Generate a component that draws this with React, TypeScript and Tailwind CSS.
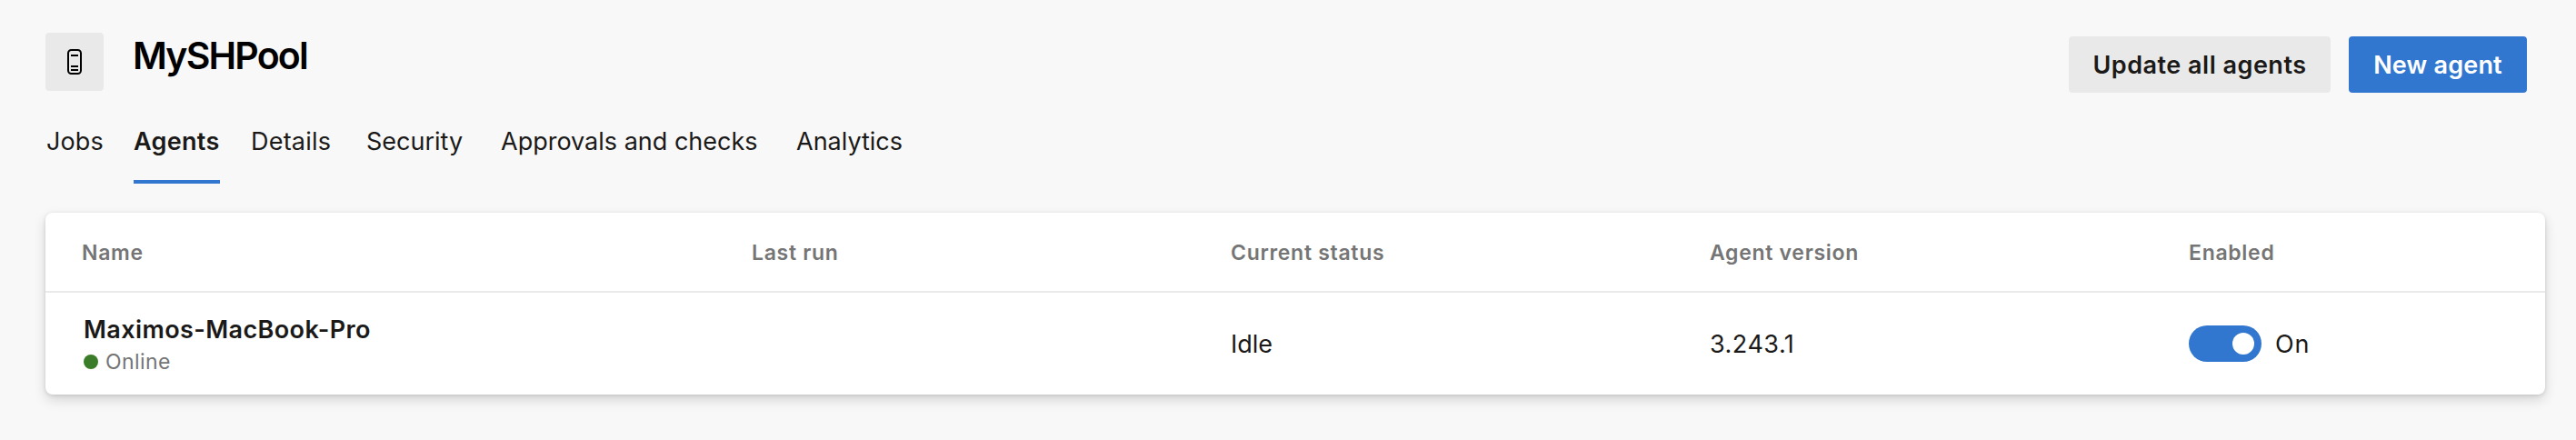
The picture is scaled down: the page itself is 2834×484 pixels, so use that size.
const tabs = [
  { label: "Jobs", cell: "w-[96px]", text: "tracking-[0.1px]" },
  { label: "Agents", cell: "w-[129px]", text: "", active: true },
  { label: "Details", cell: "w-[127px]", text: "tracking-[0.2px]" },
  { label: "Security", cell: "w-[148px]", text: "" },
  { label: "Approvals and checks", cell: "w-[325px]", text: "" },
  { label: "Analytics", cell: "w-[130px]", text: "" },
];

const columns = ["Name", "Last run", "Current status", "Agent version", "Enabled"];

function PoolIcon() {
  return (
    <div className="flex size-16 items-center justify-center rounded bg-[#e9e9e9]">
      <svg width="16" height="28" viewBox="0 0 16 28" fill="none" stroke="#000" strokeWidth="2">
        <rect x="1" y="1" width="14" height="26" rx="3.5" />
        <path d="M4 7h8M4 19h8M4 23h8" />
      </svg>
    </div>
  );
}

function Toggle() {
  return (
    <div className="flex h-10 w-20 items-center justify-end rounded-full bg-[#3277cf] px-2">
      <div className="size-6 rounded-full bg-white" />
    </div>
  );
}

export default function App() {
  return (
    <div className="h-[484px] w-[2834px] bg-[#f8f8f8] pr-[34px] pl-[50px] pt-9 font-['Inter','Liberation_Sans',sans-serif] text-[27px] text-[#1b1a19]">
      <header className="flex h-16 items-start">
        <PoolIcon />
        <h1 className="ml-8 mt-px flex-1 text-[41px] leading-[48px] font-semibold tracking-[-1.8px] text-black">
          MySHPool
        </h1>
        <div className="mt-1 mr-5 flex gap-5 font-semibold">
          <button className="h-[62px] w-72 rounded bg-[#e9e9e9] pt-[3px] tracking-[0.5px]">Update all agents</button>
          <button className="h-[62px] w-[196px] rounded bg-[#3277cf] pt-[3px] tracking-[0.2px] text-white">
            New agent
          </button>
        </div>
      </header>

      <nav className="mt-9 flex h-[66px] pl-px leading-10">
        {tabs.map((t) => (
          <div key={t.label} className={t.cell}>
            {t.active ? (
              <div className="h-full w-[95px] border-b-4 border-[#3277cf] font-semibold tracking-[0.3px]">
                {t.label}
              </div>
            ) : (
              <div className={`whitespace-nowrap ${t.text}`}>{t.label}</div>
            )}
          </div>
        ))}
      </nav>

      <section className="mt-8 h-[200px] rounded-lg bg-white shadow-[0_6px_14px_rgba(0,0,0,0.14),0_1px_4px_rgba(0,0,0,0.12)]">
        <div className="grid h-[88px] grid-cols-[737px_527px_527px_527px_1fr] items-center border-b-2 border-[#eaeaea] pt-[3px] pl-10 text-[23px] font-semibold tracking-[0.7px] text-[#757575]">
          {columns.map((c) => (
            <div key={c}>{c}</div>
          ))}
        </div>
        <div className="grid h-[112px] grid-cols-[737px_527px_527px_527px_1fr] items-center pl-10">
          <div className="pl-0.5 pt-[5px]">
            <div className="leading-[34px] font-semibold tracking-[0.4px]">Maximos-MacBook-Pro</div>
            <div className="flex items-center gap-2 text-[23px] leading-9 tracking-[0.4px] text-[#757575]">
              <span className="size-4 rounded-full bg-[#3a7c27]" />
              Online
            </div>
          </div>
          <div />
          <div className="pt-[3px]">Idle</div>
          <div className="pt-[3px] tracking-[0.5px]">3.243.1</div>
          <div className="flex items-center gap-[15px]">
            <Toggle />
            <span className="pt-[3px] tracking-[0.8px]">On</span>
          </div>
        </div>
      </section>
    </div>
  );
}
